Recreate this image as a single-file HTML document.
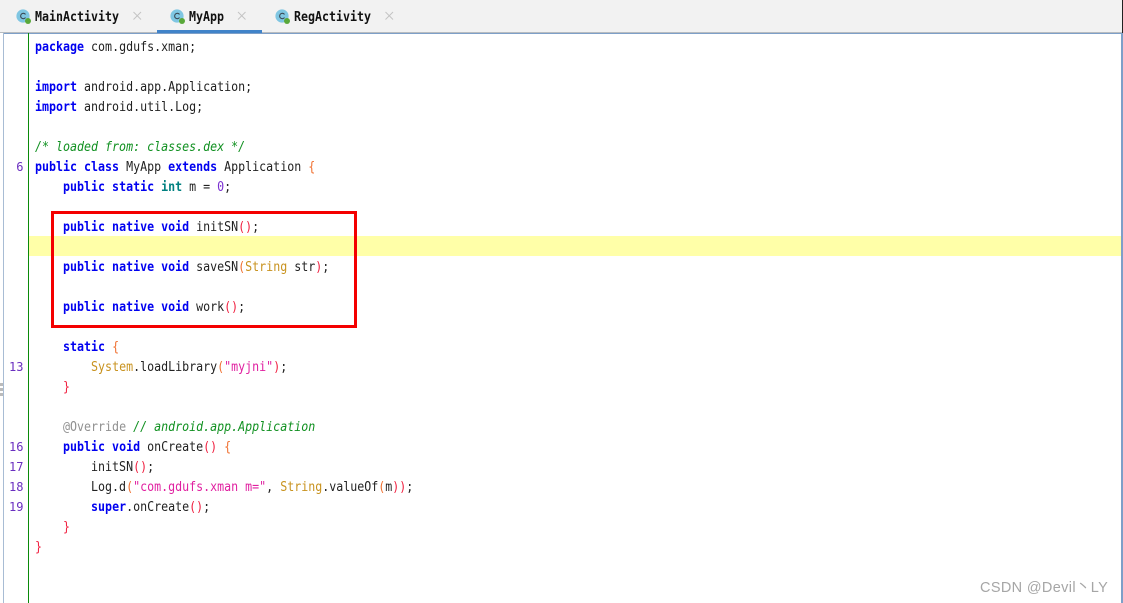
<!DOCTYPE html>
<html><head><meta charset="utf-8"><style>
html,body{margin:0;padding:0;background:#fff}
#p{position:relative;width:1123px;height:603px;overflow:hidden;background:#fff;font-family:"DejaVu Sans Mono","Liberation Mono",monospace;font-size:13px}
.a{position:absolute}
.l{position:absolute;left:35px;height:20px;line-height:20px;white-space:pre;color:#222;transform:translateY(1px) scaleX(.895);transform-origin:0 0}
.n{position:absolute;left:0;width:23.5px;text-align:right;height:20px;line-height:20px;color:#6a2fc0;font-size:12px}
b{color:#0000f0}
.t{color:#008080;font-weight:bold}
.o{color:#f07030}.r{color:#f02040}.y{color:#c8921e}.s{color:#e020a0}.c{color:#109020;font-style:italic}.g{color:#909090}.v{color:#7a30d0}
.tab{position:absolute;top:9px;height:17px;line-height:17px;font-weight:bold;color:#111;font-size:13px;transform:scaleX(.895);transform-origin:0 0}
</style></head><body><div id="p">
<div class="a" style="left:0;top:0;width:1123px;height:32px;background:#f2f2f2"></div>
<div class="a" style="left:0;top:32px;width:1123px;height:1px;background:#b8bcc0"></div>
<div class="a" style="left:3px;top:33px;width:1118px;height:1px;background:#7d9fc8"></div>
<div class="a" style="left:3px;top:33px;width:1px;height:570px;background:#a8bcd4"></div>
<div class="a" style="left:1121px;top:33px;width:2px;height:570px;background:#7d9fc8"></div>
<div class="a" style="left:1122px;top:0;width:1px;height:33px;background:#222"></div>
<div class="a" style="left:157px;top:30px;width:105px;height:3px;background:#4083c9"></div>

<svg class="a" style="left:0;top:0" width="420" height="32">
<circle cx="23" cy="16" r="6.600" fill="#7fc6e2"/><path d="M25.500 14.400a2.700 2.700 0 1 0 0 3.200" fill="none" stroke="#3a4a55" stroke-width="1.100"/><circle cx="28" cy="21" r="3" fill="#59a83a"/>
<circle cx="177" cy="16" r="6.600" fill="#7fc6e2"/><path d="M179.500 14.400a2.700 2.700 0 1 0 0 3.200" fill="none" stroke="#3a4a55" stroke-width="1.100"/><circle cx="182" cy="21" r="3" fill="#59a83a"/>
<circle cx="282" cy="16" r="6.600" fill="#7fc6e2"/><path d="M284.500 14.400a2.700 2.700 0 1 0 0 3.200" fill="none" stroke="#3a4a55" stroke-width="1.100"/><circle cx="287" cy="21" r="3" fill="#59a83a"/>
<path d="M133.500 12l7.500 7.500M141 12l-7.500 7.500M238 12l7.500 7.500M245.500 12l-7.500 7.500M385.500 12l7.500 7.500M393 12l-7.500 7.500" stroke="#c4c4c4" stroke-width="1" fill="none"/>
</svg>
<div class="tab" style="left:35px">MainActivity</div>
<div class="tab" style="left:189px">MyApp</div>
<div class="tab" style="left:294px">RegActivity</div>

<div class="a" style="left:28px;top:33px;width:1px;height:570px;background:#0a8a0a"></div>
<div class="a" style="left:29px;top:236px;width:1092px;height:20px;background:#ffffa8"></div>
<div class="a" style="left:0;top:383px;width:3px;height:3px;background:#bbb"></div>
<div class="a" style="left:0;top:388px;width:3px;height:3px;background:#bbb"></div>
<div class="a" style="left:0;top:393px;width:3px;height:3px;background:#bbb"></div>

<div class="l" style="top:37px"><b>package</b> com.gdufs.xman;</div>
<div class="l" style="top:77px"><b>import</b> android.app.Application;</div>
<div class="l" style="top:97px"><b>import</b> android.util.Log;</div>
<div class="l c" style="top:137px">/* loaded from: classes.dex */</div>
<div class="n" style="top:157px">6</div>
<div class="l" style="top:157px"><b>public class</b> MyApp <b>extends</b> Application <span class="o">{</span></div>
<div class="l" style="top:177px">    <b>public static</b> <span class="t">int</span> m = <span class="v">0</span>;</div>
<div class="l" style="top:217px">    <b>public native void</b> initSN<span class="r">()</span>;</div>
<div class="l" style="top:257px">    <b>public native void</b> saveSN<span class="o">(</span><span class="y">String</span> str<span class="r">)</span>;</div>
<div class="l" style="top:297px">    <b>public native void</b> work<span class="r">()</span>;</div>
<div class="l" style="top:337px">    <b>static</b> <span class="o">{</span></div>
<div class="n" style="top:357px">13</div>
<div class="l" style="top:357px">        <span class="y">System</span>.loadLibrary<span class="o">(</span><span class="s">"myjni"</span><span class="r">)</span>;</div>
<div class="l" style="top:377px">    <span class="r">}</span></div>
<div class="l" style="top:417px">    <span class="g">@Override</span> <span class="c">// android.app.Application</span></div>
<div class="n" style="top:437px">16</div>
<div class="l" style="top:437px">    <b>public void</b> onCreate<span class="r">()</span> <span class="o">{</span></div>
<div class="n" style="top:457px">17</div>
<div class="l" style="top:457px">        initSN<span class="r">()</span>;</div>
<div class="n" style="top:477px">18</div>
<div class="l" style="top:477px">        Log.d<span class="o">(</span><span class="s">"com.gdufs.xman m="</span>, <span class="y">String</span>.valueOf<span class="o">(</span>m<span class="r">))</span>;</div>
<div class="n" style="top:497px">19</div>
<div class="l" style="top:497px">        <b>super</b>.onCreate<span class="r">()</span>;</div>
<div class="l" style="top:517px">    <span class="r">}</span></div>
<div class="l" style="top:537px"><span class="r">}</span></div>

<div class="a" style="left:51px;top:211px;width:300px;height:111px;border:3px solid #f40000"></div>
<div class="a" style="left:980px;top:578px;height:20px;white-space:pre;color:#a6a6a6;font:14.5px/20px 'Liberation Sans','Noto Sans CJK SC',sans-serif;letter-spacing:.35px">CSDN @Devil丶LY</div>
</div></body></html>
